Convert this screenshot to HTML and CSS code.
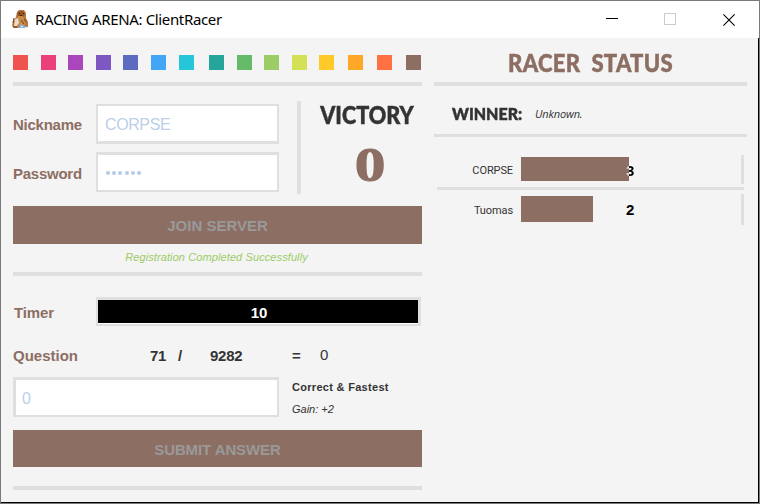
FILE: index.html
```html
<!DOCTYPE html>
<html lang="en">
<head>
<meta charset="utf-8">
<title>RACING ARENA: ClientRacer</title>
<link rel="stylesheet" href="styles.css">
</head>
<body>
<div class="window">
  <header class="titlebar">
    <svg class="app-icon" viewBox="0 0 17 19" width="17" height="19">
      <path d="M5 2 7 0h5l2 3v5l2 4v5l-2 1H2l-2-2 1-5 3-4z" fill="#b8763a"/>
      <path d="M5 3 7 1h4l2 3-2 4H6z" fill="#925724"/>
      <path d="M6 6h5l3 6-2 5H8L6 12z" fill="#c88b48"/>
      <path d="M3 9 6 8l1 5-2 3H2z" fill="#e9dcc7"/>
      <path d="M7 3h1v1H7zM11 3h1v1h-1zM8 5h2v1H8z" fill="#35200f"/>
      <path d="M2 8 1 13M12 9l2 3M9 10l3 4M1 17h4" stroke="#744019" fill="none"/>
      <path d="M6 17 9 14l3 2 4 1v1H7z" fill="#8cb1df"/>
      <path d="M9 16h2v1H9zM13 17h3v1h-3z" fill="#e4eefa"/>
    </svg>
    <h1 class="title">RACING ARENA: ClientRacer</h1>
    <svg class="controls" viewBox="0 0 100 14" width="100" height="14" shape-rendering="crispEdges">
      <path d="M0 5.500h12" stroke="#000"/>
      <rect x="58.500" y="0.500" width="11" height="11" fill="none" stroke="#ccc"/>
    </svg>
    <svg class="close" viewBox="0 0 12 12" width="12" height="12">
      <path d="M.4.4l11.200 11.200M11.600.4.4 11.600" stroke="#000" stroke-width="1.100"/>
    </svg>
  </header>
  <main class="content">
    <section class="play">
      <div class="palette">
        <i class="red"></i><i class="pink"></i><i class="purple"></i><i class="violet"></i><i class="indigo"></i>
        <i class="blue"></i><i class="cyan"></i><i class="teal"></i><i class="green"></i><i class="light-green"></i>
        <i class="lime"></i><i class="yellow"></i><i class="orange"></i><i class="coral"></i><i class="brown"></i>
      </div>
      <div class="rule"></div>
      <div class="account">
        <div class="fields">
          <span class="label nickname">Nickname</span><div class="field nick"><span>CORPSE</span></div>
          <span class="label password">Password</span><div class="field pass"><span class="dots"><b></b><b></b><b></b><b></b><b></b><b></b></span></div>
        </div>
        <div class="victory">
          <h2 class="display victory-title">VICTORY</h2>
          <span class="victory-count">0</span>
        </div>
      </div>
      <div class="button join"><span>JOIN SERVER</span></div>
      <p class="message">Registration Completed Successfully</p>
      <div class="rule"></div>
      <div class="timer"><span class="label timer-label">Timer</span><div class="timer-bar">10</div></div>
      <div class="question">
        <span class="label question-label">Question</span><b>71</b><b>/</b><b>9282</b><b>=</b><span class="result">0</span>
      </div>
      <div class="answer">
        <div class="field answer-field"><span>0</span></div>
        <div class="feedback"><strong>Correct &amp; Fastest</strong><em>Gain: +2</em></div>
      </div>
      <div class="button submit"><span>SUBMIT ANSWER</span></div>
      <div class="rule last"></div>
    </section>
    <section class="status">
      <h2 class="display status-title">RACER STATUS</h2>
      <div class="rule"></div>
      <div class="winner"><h3 class="display winner-title">WINNER:</h3><em>Unknown.</em></div>
      <div class="thin-rule"></div>
      <div class="racers">
        <div class="racer first"><span class="name">CORPSE</span>
          <div class="track"><div class="fill" style="width:108px"></div><b class="score split">3</b></div></div>
        <div class="thin-rule"></div>
        <div class="racer second"><span class="name">Tuomas</span>
          <div class="track"><div class="fill" style="width:72px"></div><b class="score">2</b></div></div>
      </div>
    </section>
  </main>
</div>
</body>
</html>
```
FILE: styles.css
```css
* { box-sizing: border-box; }
body { margin: 0; font-family: "Liberation Sans", sans-serif; color: #333; }
h1, h2, h3, p { margin: 0; }
.window { width: 760px; height: 504px; border: 1px solid #7a7a7a; background: #f4f4f4; overflow: hidden; }
.titlebar { height: 37px; background: #fff; display: flex; align-items: center; padding-left: 11px; }
.app-icon { flex: none; }
.title { font: 400 15px/20px "Noto Sans", sans-serif; color: #000; width: 188px; margin: -2px 0 0 6px; white-space: nowrap; letter-spacing: -.35px; }
.controls { margin-left: 383px; width: 100px; flex: none; }
.close { margin-left: 17px; flex: none; }
.content { display: flex; height: 465px; border-right: 1px solid #000; border-bottom: 1px solid #000; }
.play { width: 409px; margin-left: 12px; flex: none; }
.rule { height: 4px; background: #dfdfdf; }
.thin-rule { height: 3px; background: #dfdfdf; }
.palette { height: 44px; padding-top: 17px; display: grid; grid-template-columns: 28px 27px 28px 27px 28px 28px 30px 28px 27px 28px 27px 29px 29px 29px 15px; }
.palette i { width: 15px; height: 15px; }
.red { background: #ef5350; } .pink { background: #ec407a; } .purple { background: #ab47bc; }
.violet { background: #7e57c2; } .indigo { background: #5c6bc0; } .blue { background: #42a5f5; }
.cyan { background: #26c6da; } .teal { background: #26a69a; } .green { background: #66bb6a; }
.light-green { background: #9ccc65; } .lime { background: #d4e157; } .yellow { background: #ffca28; }
.orange { background: #ffa726; } .coral { background: #ff7043; } .brown { background: #8d6e63; }
.account { display: flex; height: 120px; padding-top: 15px; }
.fields { width: 284px; padding-top: 3px; display: grid; grid-template-columns: 83px 183px; grid-template-rows: 40px 40px; row-gap: 8px; align-items: center; align-content: start; }
.label { font-size: 15px; line-height: 18px; font-weight: bold; color: #8d6e63; white-space: nowrap; }
.nickname { letter-spacing: -.25px; padding-top: 1px; }
.password { letter-spacing: -.25px; padding-top: 3px; }
.field { height: 40px; background: #fff; border: 2px solid #dfdfdf; color: #bbcfe8; font-size: 16px; letter-spacing: -.4px; display: flex; align-items: center; padding-left: 7px; }
.nick { border-bottom-width: 3px; padding-top: 2px; }
.pass { border-top-width: 3px; }
.dots { display: flex; gap: 2.2px; padding-left: 1px; }
.dots b { width: 4px; height: 4px; border-radius: 50%; background: #b4cbe8; }
.victory { width: 125px; height: 93px; border-left: 4px solid #dfdfdf; display: flex; flex-direction: column; align-items: center; }
.display { font-family: Lato, sans-serif; font-weight: 900; white-space: nowrap; -webkit-text-stroke: .5px currentColor; }
.victory-title { font-size: 24px; line-height: 28px; margin-left: 10px; transform: scaleX(.9); }
.victory-count { font: bold 48px/56px "Liberation Serif", serif; color: #8d6e63; margin: 8px 0 0 17px; transform: scaleX(1.28); -webkit-text-stroke: 1px #8d6e63; }
.button { background: #8d6e63; color: #999; font-size: 15px; font-weight: bold; display: flex; align-items: center; justify-content: center; }
.join { height: 38px; }
.submit { height: 37px; margin-top: 13px; padding-top: 2px; letter-spacing: -.1px; }
.message { height: 28px; font-size: 11px; line-height: 27px; font-style: italic; text-align: center; color: #9ccc65; padding-right: 2px; letter-spacing: .1px; }
.timer { margin-top: 21px; display: flex; align-items: center; }
.timer-label { width: 83px; padding-left: 1px; padding-top: 3px; letter-spacing: -.15px; }
.timer-bar { width: 325px; height: 29px; background: #000; border: solid #dfdfdf; border-width: 3px 3px 2px 2px; box-shadow: inset 0 -1px #fff; color: #fff; font-size: 15px; font-weight: bold; line-height: 26px; text-align: center; padding-left: 2px; }
.question { margin-top: 16px; height: 28px; display: grid; grid-template-columns: 137px 28px 32px 82px 28px auto; align-items: center; font-size: 15px; line-height: 18px; letter-spacing: -.25px; }
.question-label { letter-spacing: 0; }
.result { margin-top: -2px; }
.answer { display: flex; margin-top: 7px; }
.answer-field { width: 266px; border-width: 3px 2px 2px 3px; padding-left: 6px; padding-top: 3px; }
.feedback { margin-left: 13px; font-size: 11px; line-height: 13px; display: flex; flex-direction: column; gap: 9px; padding-top: 4px; }
.feedback strong { letter-spacing: .3px; }
.last { margin-top: 19px; }
.status { width: 313px; margin-left: 12px; flex: none; }
.status-title { height: 44px; font-size: 24px; line-height: 49px; text-align: center; color: #8d6e63; word-spacing: 6px; letter-spacing: .3px; transform: scaleX(.92); }
.winner { height: 48px; padding: 4px 0 0 18px; display: flex; align-items: center; font: 11px "Open Sans", sans-serif; }
.winner em { padding-top: 2px; letter-spacing: -.15px; }
.winner-title { width: 83px; font-size: 17px; line-height: 22px; padding-top: 4px; transform: scaleX(.94); transform-origin: left; }
.racers { width: 307px; margin: 18px 0 0 3px; }
.racer { display: flex; border-right: 3px solid #dfdfdf; }
.first { height: 29px; padding: 2px 0 3px; margin-bottom: 3px; }
.second { height: 31px; padding: 2px 0 3px; margin-top: 4px; }
.name { width: 76px; margin-right: 8px; text-align: right; font: 11px/27px Roboto, sans-serif; letter-spacing: -.1px; }
.second .name { line-height: 29px; }
.track { position: relative; width: 220px; height: 100%; font: bold 15px/27px "Liberation Sans", sans-serif; color: #000; }
.score { position: absolute; left: 105px; top: 0; }
.second .score { line-height: 28px; }
.fill { height: 100%; background: #8d6e63; }
.split { color: transparent; background: linear-gradient(90deg, #d5e2ec 3px, #000 3px); -webkit-background-clip: text; background-clip: text; }
```
